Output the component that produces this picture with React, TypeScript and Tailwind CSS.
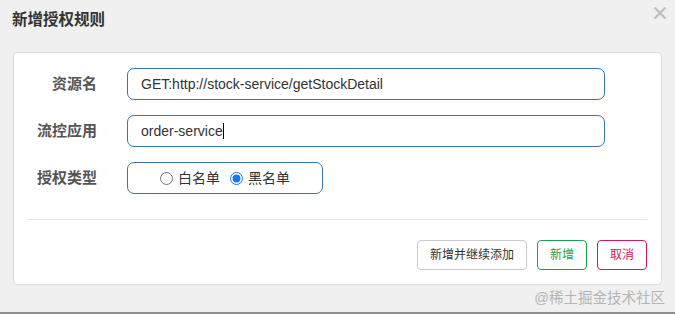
import React from "react";

const FieldRow: React.FC<{ label: string; children: React.ReactNode }> = ({ label, children }) => (
  <div className="flex items-center">
    <div className="w-[83px] text-right text-[15px] font-semibold text-[#555]">{label}</div>
    <div className="ml-[30px]">{children}</div>
  </div>
);

const App: React.FC = () => {
  return (
    <div className="w-[675px] h-[314px] bg-[#f0f0f0] flex flex-col font-['Liberation_Sans','Noto_Sans_CJK_SC',sans-serif] text-[#333] overflow-hidden">
      {/* Header */}
      <div className="h-[52px] flex items-start justify-between pl-[12px] pr-[8px]">
        <div className="pt-[9px] text-[15.5px] leading-[22px] font-bold text-[#333]">新增授权规则</div>
        <svg className="mt-[7px]" width="14" height="12" viewBox="0 0 14 12">
          <path d="M1.5 0.5 L12.5 11.5 M12.5 0.5 L1.5 11.5" stroke="#c2c2c2" strokeWidth="2.4" />
        </svg>
      </div>

      {/* Panel */}
      <div className="mx-[13px] h-[233px] bg-white border border-[#ddd] rounded-[4px] flex flex-col">
        <div className="pt-[15px] flex flex-col gap-[15px]">
          <FieldRow label="资源名">
            <div className="w-[478px] h-[32px] border border-[#3a74ab] rounded-[7px] flex items-center px-[13px] text-[14px]">
              GET:http://stock-service/getStockDetail
            </div>
          </FieldRow>
          <FieldRow label="流控应用">
            <div className="w-[478px] h-[32px] border border-[#3a74ab] rounded-[7px] flex items-center px-[13px] text-[14px]">
              order-service
              <span className="w-px h-[16px] bg-black" />
            </div>
          </FieldRow>
          <FieldRow label="授权类型">
            <div className="w-[196px] h-[32px] border border-[#3a74ab] rounded-[7px] flex items-center justify-center gap-[10px] text-[14px]">
              <label className="flex items-center gap-[5px]">
                <input type="radio" name="strategy" className="m-0 w-[13px] h-[13px] accent-[#1f75f0]" />
                <span>白名单</span>
              </label>
              <label className="flex items-center gap-[5px]">
                <input type="radio" name="strategy" defaultChecked className="m-0 w-[13px] h-[13px] accent-[#1f75f0]" />
                <span>黑名单</span>
              </label>
            </div>
          </FieldRow>
        </div>

        <div className="mx-[14px] mt-[25px] border-t border-[#e5e5e5]" />

        <div className="mt-[20px] mr-[14px] flex justify-end gap-[10px] text-[12px]">
          <button className="h-[30px] px-[12px] bg-white border border-[#ccc] rounded-[4px] text-[#333]">
            新增并继续添加
          </button>
          <button className="h-[30px] w-[50px] bg-white border border-[#1ea14c] rounded-[4px] text-[#1ea14c]">
            新增
          </button>
          <button className="h-[30px] w-[50px] bg-white border border-[#d3175b] rounded-[4px] text-[#d3175b]">
            取消
          </button>
        </div>
      </div>

      {/* Watermark */}
      <div className="flex-1 flex items-center justify-end pr-[10px] text-[14.5px] text-[#b5b5b5]">
        @稀土掘金技术社区
      </div>
      <div className="h-[2px] bg-[#8e8e8e]" />
    </div>
  );
};

export default App;
